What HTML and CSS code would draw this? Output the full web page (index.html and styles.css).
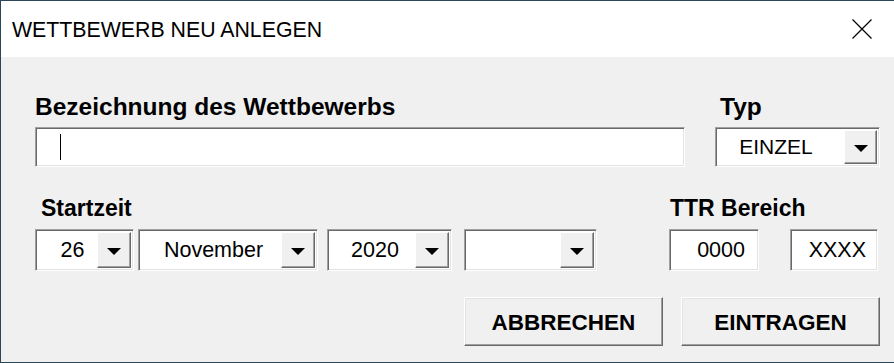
FILE: index.html
```html
<!DOCTYPE html>
<html lang="de">

<head>
    <meta charset="UTF-8">
    <meta name="viewport" content="width=device-width, initial-scale=1.0">
    <title>Wettbewerb neu anlegen</title>
    <link rel="stylesheet" href="styles.css">
</head>

<body>
    <div class="window">
        <div class="titlebar">
            <span class="title">WETTBEWERB NEU ANLEGEN</span>
            <svg class="close" width="20" height="20" viewBox="0 0 20 20">
                <path d="M0.5 0.5 L19.5 19.5 M19.5 0.5 L0.5 19.5" stroke="#000" stroke-width="1.2" fill="none" />
            </svg>
        </div>

        <div class="content">
            <div class="row row-top">
                <div class="field field-name">
                    <div class="label label-big">Bezeichnung des Wettbewerbs</div>
                    <div class="box box-name"><span class="caret"></span></div>
                </div>
                <div class="field field-typ">
                    <div class="label label-big label-typ">Typ</div>
                    <div class="box select select-typ">
                        <span class="value">EINZEL</span>
                        <span class="drop"><span class="arrow"></span></span>
                    </div>
                </div>
            </div>

            <div class="row row-mid">
                <div class="field">
                    <div class="label label-start">Startzeit</div>
                    <div class="selects">
                        <div class="box select sel-day">
                            <span class="value">26</span>
                            <span class="drop"><span class="arrow"></span></span>
                        </div>
                        <div class="box select sel-month">
                            <span class="value">November</span>
                            <span class="drop"><span class="arrow"></span></span>
                        </div>
                        <div class="box select sel-year">
                            <span class="value">2020</span>
                            <span class="drop"><span class="arrow"></span></span>
                        </div>
                        <div class="box select sel-time">
                            <span class="value"></span>
                            <span class="drop"><span class="arrow"></span></span>
                        </div>
                    </div>
                </div>
                <div class="field field-ttr">
                    <div class="label label-ttr">TTR Bereich</div>
                    <div class="ttr-inputs">
                        <div class="box ttr ttr-from">0000</div>
                        <div class="box ttr ttr-to">XXXX</div>
                    </div>
                </div>
            </div>

            <div class="row row-buttons">
                <div class="btn">ABBRECHEN</div>
                <div class="btn">EINTRAGEN</div>
            </div>
        </div>
    </div>
</body>

</html>
```

FILE: styles.css
```css
* {
    box-sizing: border-box;
}

body {
    margin: 0;
    font-family: "Liberation Sans", Arial, sans-serif;
    color: #000;
}

.window {
    width: 894px;
    height: 363px;
    border-top: 1px solid #2c4757;
    border-left: 1px solid #2c4757;
    border-bottom: 1px solid #2c4757;
    display: flex;
    flex-direction: column;
    background: #f0f0f0;
}

.titlebar {
    height: 56px;
    background: #fff;
    display: flex;
    align-items: center;
    justify-content: space-between;
    padding: 2px 22px 0 11px;
}

.title {
    font-size: 21.3px;
}

.close {
    display: block;
    margin-top: -3px;
}

.content {
    flex: 1;
    padding: 36px 14px 0 34px;
}

.row {
    display: flex;
}

.label {
    font-weight: bold;
}

.label-big {
    font-size: 24.5px;
    line-height: 27px;
    margin-bottom: 7px;
}

.label-typ {
    padding-left: 5px;
}

.label-start,
.label-ttr {
    font-size: 23px;
    line-height: 26px;
    margin-bottom: 8px;
}

.label-start {
    padding-left: 6px;
}

.label-ttr {
    padding-left: 1px;
}

/* sunken field */
.box {
    background: #fff;
    border: 1px solid;
    border-color: #a0a0a0 #fff #fff #a0a0a0;
    box-shadow: inset 1px 1px 0 #696969, inset -1px -1px 0 #e3e3e3;
    font-size: 21.5px;
    display: flex;
    align-items: center;
}

.row-top {
    gap: 30px;
}

.box-name {
    width: 650px;
    height: 40px;
    padding-left: 24px;
}

.caret {
    display: block;
    width: 1px;
    height: 26px;
    background: #000;
}

.select {
    padding: 2px;
}

.select .value {
    flex: 1;
    text-align: center;
    padding-left: 5px;
}

.drop {
    align-self: stretch;
    width: 34px;
    background: #f0f0f0;
    border: 1px solid;
    border-color: #fff #696969 #696969 #fff;
    box-shadow: inset -1px -1px 0 #a0a0a0;
    display: flex;
    align-items: center;
    justify-content: center;
    padding-top: 2px;
}

.arrow {
    width: 0;
    height: 0;
    border-left: 7px solid transparent;
    border-right: 7px solid transparent;
    border-top: 7px solid #000;
}

.select-typ {
    width: 165px;
    height: 40px;
    font-size: 21px;
}

.select-typ .value {
    padding-left: 0;
    padding-right: 10px;
}

.select-typ .drop {
    width: 33px;
}

.row-mid {
    margin-top: 28px;
    justify-content: space-between;
    padding-right: 2px;
}

.selects {
    display: flex;
}

.selects .select {
    height: 42px;
}

.sel-day {
    width: 99px;
}

.sel-day .value {
    padding-left: 10px;
}

.sel-month {
    width: 180px;
    margin-left: 4px;
}

.sel-year {
    width: 125px;
    margin-left: 9px;
}

.sel-time {
    width: 133px;
    margin-left: 12px;
}

.ttr-inputs {
    display: flex;
    gap: 31px;
}

.ttr {
    height: 42px;
    justify-content: flex-end;
    padding-right: 13px;
}

.ttr-from {
    width: 90px;
}

.ttr-to {
    width: 88px;
    padding-right: 11px;
}

.row-buttons {
    margin-top: 26px;
    justify-content: flex-end;
    gap: 18px;
}

/* raised button */
.btn {
    width: 199px;
    height: 49px;
    background: #f0f0f0;
    border: 1px solid;
    border-color: #fff #696969 #696969 #fff;
    box-shadow: inset -1px -1px 0 #a0a0a0, inset 1px 1px 0 #e3e3e3;
    font-weight: bold;
    font-size: 22.5px;
    display: flex;
    align-items: center;
    justify-content: center;
    padding-top: 3px;
}
```
